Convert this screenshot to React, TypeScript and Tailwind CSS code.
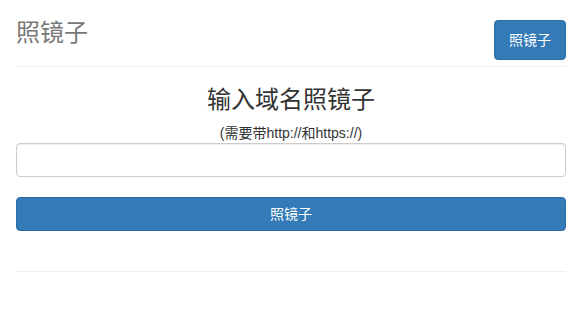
export default function App() {
  return (
    <div
      className="min-h-screen bg-white pl-4 pr-[13px] text-[14px] leading-[20px] text-[#333]"
      style={{ fontFamily: '"Liberation Sans", Arial, "Noto Sans CJK SC", sans-serif' }}
    >
      {/* Page header */}
      <div className="flex items-start justify-between border-b border-[#eee] pt-5 pb-[6px]">
        <h3 className="text-[24px] leading-[26px] font-normal text-[#777]">照镜子</h3>
        <button className="h-[40px] w-[72px] rounded-[4px] border border-[#2e6da4] bg-[#337ab7] text-[14px] text-white">
          照镜子
        </button>
      </div>

      {/* Form */}
      <div className="pt-5 text-center">
        <h3 className="text-[24px] leading-[26px] font-normal text-[#333]">输入域名照镜子</h3>
        <p className="mt-[10px]">(需要带http://和https://)</p>
      </div>
      <input
        type="text"
        className="block h-[34px] w-full rounded-[4px] border border-[#ccc] px-3 shadow-[inset_0_1px_1px_rgba(0,0,0,0.075)] outline-none"
      />
      <button className="mt-5 block h-[34px] w-full rounded-[4px] border border-[#2e6da4] bg-[#337ab7] text-[14px] text-white">
        照镜子
      </button>

      <div className="mt-10 border-t border-[#eee]" />
    </div>
  );
}
